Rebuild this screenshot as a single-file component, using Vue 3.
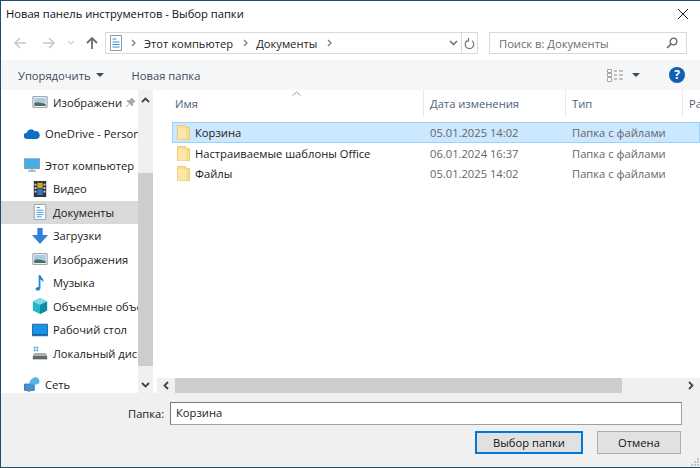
<script setup>
const navRows = [
  { name: "Изображени", icon: "pictures", pin: true, gap: 0 },
  { name: "OneDrive - Personal", icon: "cloud", root: true, gap: 8 },
  { name: "Этот компьютер", icon: "computer", root: true, gap: 8 },
  { name: "Видео", icon: "video", gap: 0 },
  { name: "Документы", icon: "docs", active: true, gap: 0 },
  { name: "Загрузки", icon: "down", gap: 0 },
  { name: "Изображения", icon: "pictures", gap: 0 },
  { name: "Музыка", icon: "music", gap: 0 },
  { name: "Объемные объекты", icon: "cube", gap: 0 },
  { name: "Рабочий стол", icon: "desktop", gap: 0 },
  { name: "Локальный диск (C:)", icon: "disk", gap: 0 },
  { name: "Сеть", icon: "network", root: true, gap: 8 },
];

const files = [
  { name: "Корзина", date: "05.01.2025 14:02", selected: true },
  { name: "Настраиваемые шаблоны Office", date: "06.01.2024 16:37" },
  { name: "Файлы", date: "05.01.2025 14:02" },
];
</script>

<template>
  <div class="dialog">
    <header class="title-bar">
      <span>Новая панель инструментов - Выбор папки</span>
      <svg class="close" width="12" height="12" viewBox="0 0 12 12">
        <path d="M1 1l10 10M11 1L1 11" stroke="#222" stroke-width="1" fill="none" />
      </svg>
    </header>

    <div class="address-row">
      <svg class="nav-btn" width="14" height="14" viewBox="0 0 14 14">
        <path d="M13 7H2M7 2L2 7l5 5" stroke="#c8c8c8" stroke-width="1.5" fill="none" />
      </svg>
      <svg class="nav-btn fwd" width="14" height="14" viewBox="0 0 14 14">
        <path d="M1 7h11M7 2l5 5-5 5" stroke="#c8c8c8" stroke-width="1.5" fill="none" />
      </svg>
      <svg class="nav-btn small" width="8" height="6" viewBox="0 0 8 6">
        <path d="M1 1l3 3 3-3" stroke="#d0d0d0" stroke-width="1.2" fill="none" />
      </svg>
      <svg class="nav-btn up" width="14" height="14" viewBox="0 0 14 14">
        <path d="M7 13V2M2 7l5-5 5 5" stroke="#6d6d6d" stroke-width="1.8" fill="none" />
      </svg>
      <div class="address">
        <svg class="addr-icon" width="12" height="16" viewBox="0 0 12 16">
          <path d="M.5.5h11v15H.5z" fill="#fff" stroke="#8a9aa8" />
          <path d="M2.500 4h4M2.500 7h7M2.500 9.500h7M2.500 12h7" stroke="#2f8fd8" />
        </svg>
        <svg class="crumb-arrow" width="5" height="8" viewBox="0 0 5 8"><path d="M1 1l3 3-3 3" stroke="#777" stroke-width="1.2" fill="none" /></svg>
        <span class="crumb">Этот компьютер</span>
        <svg class="crumb-arrow" width="5" height="8" viewBox="0 0 5 8"><path d="M1 1l3 3-3 3" stroke="#777" stroke-width="1.2" fill="none" /></svg>
        <span class="crumb">Документы</span>
        <svg class="crumb-arrow" width="5" height="8" viewBox="0 0 5 8"><path d="M1 1l3 3-3 3" stroke="#777" stroke-width="1.2" fill="none" /></svg>
        <svg class="addr-drop" width="9" height="6" viewBox="0 0 9 6"><path d="M1 1l3.500 3.500L8 1" stroke="#666" stroke-width="1.4" fill="none" /></svg>
        <div class="addr-refresh">
          <svg width="11" height="13" viewBox="0 0 11 13">
            <path d="M7.800 3.700A4.300 4.300 0 1 1 3.200 3.700M4.500 .8v3.400H1.500" stroke="#777" stroke-width="1.2" fill="none" />
          </svg>
        </div>
      </div>
      <div class="search">
        <span>Поиск в: Документы</span>
        <svg width="12" height="12" viewBox="0 0 12 12">
          <circle cx="7.500" cy="4.500" r="3.300" stroke="#666" stroke-width="1.3" fill="none" />
          <path d="M5 7l-4 4" stroke="#666" stroke-width="1.6" />
        </svg>
      </div>
    </div>

    <div class="toolbar">
      <span class="tool">Упорядочить</span>
      <span class="caret organise"></span>
      <span class="tool new-folder">Новая папка</span>
      <svg class="view-icon" width="16" height="13" viewBox="0 0 16 13">
        <path d="M.5.5h4v3h-4zM.5 4.500h4v3h-4zM.5 8.500h4v4h-4z" fill="#fff" stroke="#a5a5a5" />
        <path d="M7 2h3M12 2h4M7 6h3M12 6h4M7 10h3M12 10h4" stroke="#8a8a8a" />
      </svg>
      <span class="caret view"></span>
      <div class="help">?</div>
    </div>

    <div class="browser">
      <aside class="nav">
        <div
          v-for="row in navRows"
          :key="row.name"
          class="nav-row"
          :class="{ active: row.active, root: row.root, pinned: row.pin }"
          :style="{ marginTop: row.gap + 'px' }"
        >
          <svg class="nav-icon" width="16" height="16" viewBox="0 0 18 18">
            <template v-if="row.icon === 'pictures'">
              <path d="M1 3h16v12H1z" fill="#fff" stroke="#808a94" />
              <path d="M2.500 4.500h13v5.500h-13z" fill="#a9cbe8" />
              <path d="M2.500 13.500V10c4-1.500 7 0 13 1v2.500z" fill="#4f6f62" />
            </template>
            <template v-else-if="row.icon === 'cloud'">
              <path d="M3.500 14.500a3.500 3.500 0 0 1-.5-7A5 5 0 0 1 12 6a4.300 4.300 0 0 1 2.500 8.500z" fill="#0f6cc4" />
            </template>
            <template v-else-if="row.icon === 'computer'">
              <path d="M.5 2h17v11H.5z" fill="#43aee8" stroke="#7d97a8" />
              <path d="M8 13h2v2H8zM4.500 15h9v1.500h-9z" fill="#9db0bd" />
            </template>
            <template v-else-if="row.icon === 'video'">
              <path d="M2 0h14v18H2z" fill="#2f3439" />
              <path d="M6 2h6v6H6z" fill="#d9a52c" />
              <path d="M6 9h6v7H6z" fill="#2f78c4" />
              <path d="M3 3h2v2H3zM3 7h2v2H3zM3 11h2v2H3zM13 3h2v2h-2zM13 7h2v2h-2zM13 11h2v2h-2z" fill="#dce3e8" />
            </template>
            <template v-else-if="row.icon === 'docs'">
              <path d="M2.500 .5h13v17h-13z" fill="#fff" stroke="#8e9ba6" />
              <path d="M5 4h4M5 7h8M5 9.500h8M5 12h8M5 14.500h6" stroke="#2f8fd8" />
            </template>
            <template v-else-if="row.icon === 'down'">
              <path d="M6 0h6v8h6L9 18 0 8h6z" fill="#2f82d4" />
            </template>
            <template v-else-if="row.icon === 'music'">
              <path d="M7.500 0h2c.5 3 4.500 4 3 8.500-.5-2-1.500-3-3-3.500v9.500c0 2-2 3.500-4 3-2.500-.8-1.500-4.500 2-4z" fill="#1f87d8" />
            </template>
            <template v-else-if="row.icon === 'cube'">
              <path d="M9 0l8 4v10l-8 4-8-4V4z" fill="#25b5c6" />
              <path d="M9 0l8 4-8 4-8-4z" fill="#7fdbe3" />
              <path d="M9 8l8-4v10l-8 4z" fill="#12899e" />
            </template>
            <template v-else-if="row.icon === 'desktop'">
              <path d="M.5 2.500h17v13H.5z" fill="#1593e6" stroke="#1b5f96" />
              <path d="M1 13.500h16V15H1z" fill="#1b5f96" />
            </template>
            <template v-else-if="row.icon === 'disk'">
              <path d="M2 2h2v2H2zM5 2h2v2H5zM2 5h2v2H2zM5 5h2v2H5z" fill="#2f9fe0" />
              <path d="M1 11l2-2h12l2 2v5H1z" fill="#a9b0b4" />
              <path d="M1 12.500h16V16H1z" fill="#60666a" />
            </template>
            <template v-else>
              <path d="M.5 8h11v7H.5z" fill="#3f95d8" stroke="#2b6ea6" />
              <path d="M4 15h3v2H4z" fill="#8aa0b0" />
              <path d="M6 8c0-4 3-7 7-8 4 1 5 4 4 7-3 2-8 2-11 1z" fill="#59b2ea" />
            </template>
          </svg>
          <span class="nav-label">{{ row.name }}</span>
          <svg v-if="row.pin" class="pin" width="11" height="11" viewBox="0 0 11 11">
            <path d="M6.500 1L10 4.500 8.800 5 7.500 6.500 7.200 9 2 3.800 4.500 3.500 6 2.200zM3.800 7.200L1 10" fill="#a8a8a8" stroke="#a8a8a8" />
          </svg>
        </div>
      </aside>

      <div class="v-scroll">
        <svg width="9" height="6" viewBox="0 0 9 6"><path d="M1 5l3.500-3.500L8 5" stroke="#444" stroke-width="1.8" fill="none" /></svg>
        <div class="v-track"><div class="v-thumb"></div></div>
        <svg width="9" height="6" viewBox="0 0 9 6"><path d="M1 1l3.500 3.500L8 1" stroke="#444" stroke-width="1.8" fill="none" /></svg>
      </div>

      <section class="files">
        <svg class="sort-arrow" width="9" height="5" viewBox="0 0 9 5"><path d="M.5 4.500l4-3.500 4 3.500" stroke="#9a9a9a" fill="none" /></svg>
        <div class="file-head cols">
          <span>Имя</span>
          <span>Дата изменения</span>
          <span>Тип</span>
          <span>Размер</span>
        </div>
        <div class="file-list">
          <div
            v-for="file in files"
            :key="file.name"
            class="file-row cols"
            :class="{ selected: file.selected }"
          >
            <span class="file-name">
              <svg width="13" height="15" viewBox="0 0 13 15">
                <path d="M.5.5h8l1 2h3v12H.5z" fill="#f9dc8c" stroke="#e8c468" stroke-width=".8" />
                <path d="M1 3h8v11.500H1z" fill="#fbe7a8" />
              </svg>
              {{ file.name }}
            </span>
            <span class="muted">{{ file.date }}</span>
            <span class="muted">Папка с файлами</span>
            <span></span>
          </div>
        </div>
        <div class="h-scroll">
          <svg width="6" height="9" viewBox="0 0 6 9"><path d="M5 1L1.500 4.500 5 8" stroke="#444" stroke-width="1.8" fill="none" /></svg>
          <div class="h-track"><div class="h-thumb"></div></div>
          <svg width="6" height="9" viewBox="0 0 6 9"><path d="M1 1l3.500 3.500L1 8" stroke="#444" stroke-width="1.8" fill="none" /></svg>
        </div>
      </section>
    </div>

    <footer class="bottom">
      <div class="folder-field">
        <label>Папка:</label>
        <div class="folder-input">Корзина</div>
      </div>
      <div class="buttons">
        <button class="primary">Выбор папки</button>
        <button>Отмена</button>
      </div>
      <svg class="grip" width="9" height="9" viewBox="0 0 9 9">
        <path d="M7 1h2v2H7zM4 4h2v2H4zM7 4h2v2H7zM1 7h2v2H1zM4 7h2v2H4zM7 7h2v2H7z" fill="#c4c4c4" />
      </svg>
    </footer>
  </div>
</template>

<style>
html,
body {
  margin: 0;
  background: #fff;
}
</style>

<style scoped>
.dialog {
  box-sizing: border-box;
  width: 700px;
  height: 468px;
  border: 1px solid #1c4f6b;
  border-right-width: 0;
  display: flex;
  flex-direction: column;
  overflow: hidden;
  background: #fff;
  font-family: "Open Sans", "Noto Sans", sans-serif;
  font-size: 11.2px;
  color: #1a1a1a;
}

.title-bar {
  height: 25px;
  flex: none;
  display: flex;
  align-items: center;
  justify-content: space-between;
  padding: 0 11px 0 5px;
  color: #111;
}

.address-row {
  height: 24px;
  flex: none;
  margin-top: 5px;
  display: flex;
  align-items: center;
}

.nav-btn {
  flex: none;
  margin-left: 12px;
}
.nav-btn.fwd {
  margin-left: 15px;
}
.nav-btn.small {
  margin-left: 11px;
}
.nav-btn.up {
  margin-left: 10px;
}

.address {
  margin-left: 6px;
  width: 373px;
  height: 22px;
  box-sizing: border-box;
  border: 1px solid #d9d9d9;
  display: flex;
  align-items: center;
  padding-left: 4px;
}
.addr-icon {
  margin-right: 9px;
}
.crumb {
  margin: 0 10px 0 8px;
  color: #222;
}
.addr-drop {
  margin-left: auto;
  margin-right: 3px;
}
.addr-refresh {
  width: 15px;
  height: 100%;
  border-left: 1px solid #d9d9d9;
  display: flex;
  align-items: center;
  justify-content: center;
}

.search {
  margin-left: 11px;
  width: 198px;
  height: 22px;
  box-sizing: border-box;
  border: 1px solid #d9d9d9;
  display: flex;
  align-items: center;
  justify-content: space-between;
  padding: 0 8px 0 9px;
  color: #6d6d6d;
}

.toolbar {
  height: 30px;
  flex: none;
  margin-top: 5px;
  background: #f5f6f7;
  display: flex;
  align-items: center;
  color: #3d4c5c;
  padding: 0 15px 0 17px;
}
.caret {
  width: 0;
  height: 0;
  border-left: 4px solid transparent;
  border-right: 4px solid transparent;
  border-top: 4px solid #3c4858;
}
.caret.organise {
  margin-left: 5px;
}
.new-folder {
  margin-left: 28px;
}
.view-icon {
  margin-left: auto;
}
.caret.view {
  margin-left: 9px;
}
.help {
  margin-left: 29px;
  width: 16px;
  height: 16px;
  border-radius: 50%;
  background: #0f5fb5;
  color: #fff;
  font-weight: 700;
  font-size: 12px;
  line-height: 16px;
  text-align: center;
}

.browser {
  flex: 1;
  min-height: 0;
  display: flex;
}

.nav {
  width: 137px;
  flex: none;
  overflow: hidden;
  padding-top: 0.5px;
}
.nav-row {
  height: 23.5px;
  display: flex;
  align-items: center;
  padding-left: 31px;
  white-space: nowrap;
}
.nav-row.root {
  padding-left: 23px;
}
.nav-row.active {
  background: #d9d9d9;
}
.nav-icon {
  flex: none;
  margin-right: 5px;
}
.nav-row.pinned .nav-label {
  width: 70px;
}
.pin {
  flex: none;
  margin-left: 2px;
}

.v-scroll {
  width: 15px;
  flex: none;
  background: #f0f0f0;
  display: flex;
  flex-direction: column;
  align-items: center;
  padding: 7px 0 5px;
  box-sizing: border-box;
}
.v-track {
  flex: 1;
  width: 100%;
  margin: 3px 0;
  padding-top: 67px;
  padding-bottom: 13px;
  box-sizing: border-box;
}
.v-thumb {
  height: 100%;
  background: #cdcdcd;
}

.files {
  flex: 1;
  min-width: 0;
  position: relative;
  display: flex;
  flex-direction: column;
  margin-left: 3px;
  overflow: hidden;
}
.sort-arrow {
  position: absolute;
  left: 136px;
  top: 1px;
}
.cols {
  display: grid;
  grid-template-columns: 252px 142px 117px 100px;
}
.file-head {
  height: 27px;
  flex: none;
  align-items: stretch;
  margin-left: 16px;
  color: #4c607a;
}
.file-head span {
  padding-left: 3px;
  display: flex;
  align-items: center;
  border-right: 1px solid #eaeaea;
}
.file-head span:nth-child(n + 2) {
  padding-left: 6px;
}

.file-list {
  flex: 1;
  padding-top: 5px;
}
.file-row {
  height: 20px;
  align-items: center;
  margin-left: 16px;
  white-space: nowrap;
}
.file-row.selected {
  height: 21px;
  background: #cce8ff;
  box-shadow: inset 0 0 0 1px #99d1ff;
}
.file-name {
  display: flex;
  align-items: center;
  gap: 5px;
  padding-left: 5px;
}
.muted {
  color: #666;
  padding-left: 6px;
}

.h-scroll {
  height: 15px;
  flex: none;
  margin-left: 1px;
  background: #f0f0f0;
  display: flex;
  align-items: center;
  padding: 0 6px;
}
.h-track {
  flex: 1;
  height: 100%;
  padding: 0 66px 0 6px;
  box-sizing: border-box;
}
.h-thumb {
  height: 100%;
  background: #cdcdcd;
}

.bottom {
  height: 74px;
  flex: none;
  background: #f0f0f0;
  position: relative;
  display: flex;
  flex-direction: column;
}
.folder-field {
  display: flex;
  align-items: center;
  margin-top: 9px;
  padding-left: 127px;
}
.folder-field label {
  width: 42px;
}
.folder-input {
  width: 512px;
  height: 23px;
  box-sizing: border-box;
  background: #fff;
  border: 1px solid #a0a0a0;
  border-top-color: #7a7a7a;
  border-left-color: #7a7a7a;
  padding-left: 5px;
  line-height: 20px;
}
.buttons {
  display: flex;
  justify-content: flex-end;
  gap: 14px;
  margin-top: 6px;
  padding-right: 19px;
}
button {
  font: inherit;
  color: #111;
  height: 23px;
  width: 84px;
  background: #e1e1e1;
  border: 1px solid #adadad;
  padding: 0;
}
button.primary {
  width: 108px;
  border: 2px solid #0078d7;
}
.grip {
  position: absolute;
  right: 1px;
  bottom: 1px;
}
</style>
